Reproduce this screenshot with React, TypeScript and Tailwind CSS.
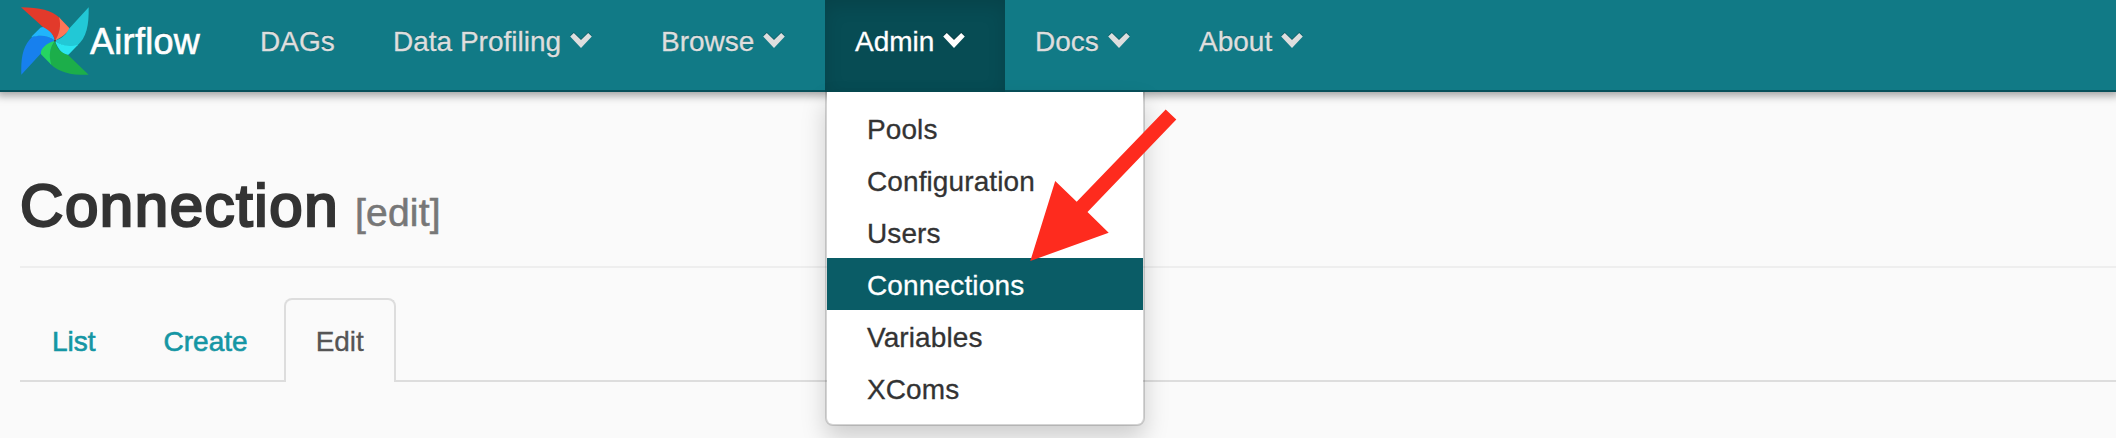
import React from "react";

function Chevron() {
  return (
    <svg
      className="ml-[8px] h-[18px] w-[24px] shrink-0 drop-shadow-[0_-1px_0_rgba(0,0,0,0.25)]"
      viewBox="-12 -9 24 18"
      fill="currentColor"
    >
      <path d="M-7.2 -8 L-10.8 -4.4 L0 6.9 L10.8 -4.4 L7.2 -8 L0 -1.1 Z" />
    </svg>
  );
}

function Pinwheel() {
  return (
    <svg className="ml-[21px] mt-[7px] h-[68px] w-[68px] shrink-0" viewBox="63 20.5 204 204">
      <path fill="#1780ee" d="M64 224 C62 170 70 135 97 110 Q135 98 165 122 C150 135 135 145 122 161 Z" />
      <path fill="#21b5fb" d="M97 107 L122 82 C142 74 160 98 165 122 C145 105 120 103 94 111 Z" />
      <path fill="#e23a2b" d="M63 21 C120 22 155 30 179 53 C184 80 178 104 165 122 C162 104 150 92 128 80 Z" />
      <path fill="#ff7557" d="M177 51 L207 83 C212 92 190 108 165 122 C179 100 184 75 177 51 Z" />
      <path fill="#22c8d6" d="M266 21 C267 75 260 112 231 137 C205 143 185 137 165 122 C186 115 199 103 207 86 Z" />
      <path fill="#2ae5f0" d="M235 133 L206 163 C190 170 171 142 165 122 C185 137 208 142 235 133 Z" />
      <path fill="#1cae4a" d="M266 224 C215 225 178 217 152 192 C144 165 151 142 165 122 C169 143 180 158 205 165 Z" />
      <path fill="#25d562" d="M154 194 L123 162 C119 148 140 128 165 122 C150 142 145 165 154 194 Z" />
      <circle cx="165" cy="122" r="3" fill="#4c3d3c" />
    </svg>
  );
}

const navItems = [
  { label: "DAGs", width: "w-[133px]", menu: false },
  { label: "Data Profiling", width: "w-[268px]", menu: true },
  { label: "Browse", width: "w-[194px]", menu: true },
  { label: "Admin", width: "w-[180px]", menu: true, active: true },
  { label: "Docs", width: "w-[164px]", menu: true },
  { label: "About", width: "w-[180px]", menu: true },
];

const menuItems = ["Pools", "Configuration", "Users", "Connections", "Variables", "XComs"];

function AdminMenu() {
  return (
    <ul className="absolute left-0 top-[92px] w-[320px] rounded-b-[8px] border-2 border-t-0 border-black/15 bg-white bg-clip-padding py-[10px] text-[#333] shadow-[0_12px_24px_rgba(0,0,0,0.175)] [text-shadow:none]">
      {menuItems.map((item) => (
        <li
          key={item}
          className={
            item === "Connections"
              ? "h-[52px] bg-[#0a5c66] px-[40px] leading-[55px] tracking-[0.15px] text-white"
              : "h-[52px] px-[40px] leading-[55px] tracking-[0.1px]"
          }
        >
          {item}
        </li>
      ))}
    </ul>
  );
}

function Arrow() {
  return (
    <svg className="absolute left-[1030px] top-[109px] z-20 h-[153px] w-[147px]" viewBox="1030 109 147 153">
      <path fill="#fe2b1e" d="M1165.7 109.5 L1176.3 119.5 L1087.5 212 L1108.7 232.7 L1030.3 261 L1055.2 181 L1076.7 201.7 Z" />
    </svg>
  );
}

export default function App() {
  return (
    <div className="relative h-[438px] w-[2116px] overflow-hidden bg-[#fafafa] font-['Liberation_Sans',Arial,sans-serif] text-[28px] text-[#333] [-webkit-text-stroke:0.3px_currentColor]">
      <nav className="relative z-10 flex h-[92px] border-b-2 border-[#07505a] bg-[#117a86] text-[#dedede] shadow-[0_1px_8px_3px_rgba(0,0,0,0.34)] [text-shadow:0_-1px_0_rgba(0,0,0,0.25)]">
        <a className="flex w-[230px] shrink-0 text-white">
          <Pinwheel />
          <span className="ml-[1px] text-[36px] leading-[84px] tracking-[0.3px] [-webkit-text-stroke:0.6px_currentColor]">Airflow</span>
        </a>
        {navItems.map((item) => (
          <div key={item.label} className={`relative shrink-0 ${item.width}`}>
            <a
              className={
                item.active
                  ? "flex h-[92px] items-center bg-[#074c54] pb-[10px] pl-[30px] text-white shadow-[inset_0_6px_18px_rgba(0,0,0,0.125)]"
                  : "flex h-[90px] items-center pb-[8px] pl-[30px]"
              }
            >
              <span className="whitespace-nowrap pt-[2px]">{item.label}</span>
              {item.menu && <Chevron />}
            </a>
            {item.active && <AdminMenu />}
          </div>
        ))}
      </nav>

      <main className="pl-[20px]">
        <header className="flex h-[176px] items-baseline border-b-2 border-[#eeeeee] pt-[78px]">
          <h1 className="text-[60px] leading-[72px] tracking-[1.55px] [-webkit-text-stroke:2.5px_currentColor]">Connection</h1>
          <small className="ml-[16px] text-[39px] tracking-[0.2px] text-[#777777] [-webkit-text-stroke:0.6px_currentColor]">[edit]</small>
        </header>
        <div className="mt-[30px] flex h-[84px] border-b-2 border-[#dddddd] leading-[40px]">
          <a className="mr-[4px] px-[32px] pt-[24px] text-[#1596a4] [-webkit-text-stroke:0.6px_currentColor]">List</a>
          <a className="mr-[4px] px-[32px] pt-[24px] text-[#1596a4] [-webkit-text-stroke:0.6px_currentColor]">Create</a>
          <a className="h-[84px] rounded-t-[8px] border-2 border-b-0 border-[#dddddd] bg-[#fafafa] px-[30px] pt-[22px] text-[#555555]">Edit</a>
        </div>
      </main>
      <Arrow />
    </div>
  );
}
